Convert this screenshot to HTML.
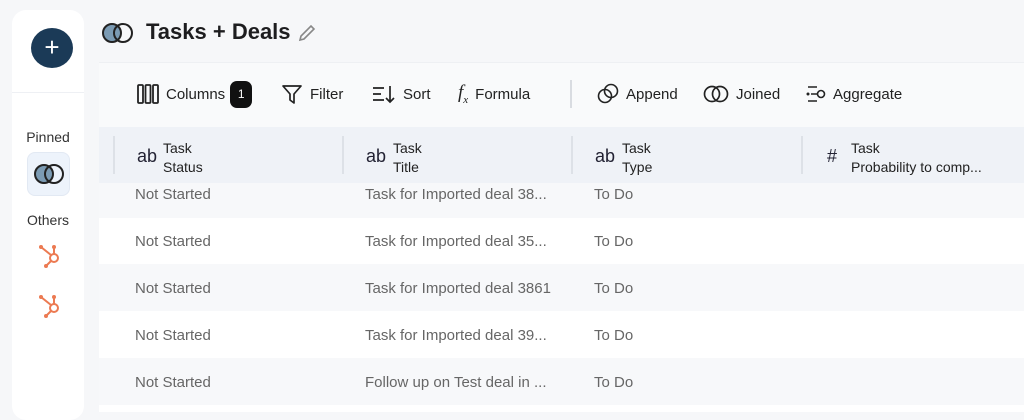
<!DOCTYPE html>
<html><head><style>
*{margin:0;padding:0;box-sizing:border-box}
body{width:1024px;height:412px;overflow:hidden;background:#f6f7f9;font-family:"Liberation Sans",sans-serif;position:relative;color:#1d1d1f}
.abs{position:absolute}
.side{left:12px;top:10px;width:72px;height:410px;background:#fff;border-radius:14px}
.plus{left:31px;top:28px;width:42px;height:40px;border-radius:50%;background:#1b3a57;color:#fff;font-size:26px;text-align:center;line-height:38px}
.lbl{font-size:14px;color:#333;width:72px;text-align:center;left:12px}
.tb{left:99px;top:62px;width:925px;height:65px;background:#f9fafb;border-top:1px solid #eef0f3}
.ti{top:82px;height:24px;font-size:15px;color:#222;display:flex;align-items:center;gap:7px}
.hd{left:99px;top:127px;width:925px;height:56px;background:#eff2f7}
.row{left:99px;width:925px}
.cell{font-size:15px;color:#666;position:absolute}
.hsep{top:136px;width:2px;height:38px;background:#dde1e7}
.hl{top:139px;font-size:14px;line-height:19px;color:#222}
.hi{top:146px;font-size:18px;color:#223}
</style></head><body>
<div class="abs side"></div>
<div class="abs" style="left:12px;top:92px;width:72px;height:1px;background:#eef0f4"></div>
<div class="abs plus">+</div>
<div class="abs lbl" style="top:129px">Pinned</div>
<div class="abs" style="left:27px;top:152px;width:43px;height:44px;border-radius:8px;background:#edf3fb;border:1px solid #e2e9f3"></div>
<svg class="abs" style="left:33px;top:163px" width="32" height="22"><circle cx="11" cy="11" r="9" fill="#7b9bb4" stroke="#222" stroke-width="2"/><circle cx="21" cy="11" r="9" fill="none" stroke="#222" stroke-width="2"/></svg>
<div class="abs lbl" style="top:212px">Others</div>
<svg class="abs" style="left:37px;top:243px" width="26" height="26" viewBox="0 0 26 26"><g stroke="#ec7a52" stroke-width="2" fill="none"><circle cx="17" cy="15" r="4"/><path d="M4 4l10 8M17 4v7M14 18l-5 5"/></g><circle cx="4" cy="4" r="2" fill="#ec7a52"/><circle cx="17" cy="4" r="2" fill="#ec7a52"/><circle cx="9" cy="23" r="2" fill="#ec7a52"/></svg>
<svg class="abs" style="left:37px;top:293px" width="26" height="26" viewBox="0 0 26 26"><g stroke="#ec7a52" stroke-width="2" fill="none"><circle cx="17" cy="15" r="4"/><path d="M4 4l10 8M17 4v7M14 18l-5 5"/></g><circle cx="4" cy="4" r="2" fill="#ec7a52"/><circle cx="17" cy="4" r="2" fill="#ec7a52"/><circle cx="9" cy="23" r="2" fill="#ec7a52"/></svg>

<svg class="abs" style="left:101px;top:22px" width="34" height="22"><circle cx="11" cy="11" r="9" fill="#7b9bb4" stroke="#222" stroke-width="2"/><circle cx="22" cy="11" r="9" fill="none" stroke="#222" stroke-width="2"/></svg>
<div class="abs" style="left:146px;top:19px;font-size:22px;font-weight:bold;color:#1d1d1f">Tasks + Deals</div>
<svg class="abs" style="left:297px;top:23px" width="20" height="20" viewBox="0 0 20 20"><path d="M3 17l1-4L14 3l3 3L7 16z" fill="none" stroke="#888" stroke-width="1.6"/></svg>

<div class="abs tb"></div>
<div class="abs ti" style="left:137px;top:80px;height:28px"><svg width="22" height="20"><g fill="none" stroke="#222" stroke-width="1.8"><rect x="1" y="1" width="5" height="18" rx="1"/><rect x="8.5" y="1" width="5" height="18" rx="1"/><rect x="16" y="1" width="5" height="18" rx="1"/></g></svg>Columns<span style="background:#111;color:#fff;border-radius:7px;width:22px;height:27px;display:inline-block;text-align:center;line-height:27px;font-size:12px;margin-left:-2px">1</span></div>
<div class="abs ti" style="left:281px"><svg width="22" height="22"><path d="M2 3h18l-7 8v9l-4-3v-6z" fill="none" stroke="#222" stroke-width="1.7" stroke-linejoin="round"/></svg>Filter</div>
<div class="abs ti" style="left:372px"><svg width="24" height="20"><g stroke="#222" stroke-width="1.7" fill="none"><path d="M1 4h11M1 10h8M1 16h11M18 2v16M14 14l4 4 4-4"/></g></svg>Sort</div>
<div class="abs ti" style="left:458px"><span style="font-style:italic;font-family:'Liberation Serif',serif;font-size:19px">f<sub style="font-size:11px">x</sub></span>Formula</div>
<div class="abs" style="left:570px;top:80px;width:2px;height:28px;background:#d9dce1"></div>
<div class="abs ti" style="left:597px"><svg width="22" height="22"><g fill="none" stroke="#222" stroke-width="1.6"><circle cx="8" cy="13" r="6.5"/><circle cx="14" cy="8" r="6.5"/></g></svg>Append</div>
<div class="abs ti" style="left:703px"><svg width="26" height="20"><g fill="none" stroke="#222" stroke-width="1.7"><circle cx="9" cy="10" r="7.5"/><circle cx="17" cy="10" r="7.5"/></g></svg>Joined</div>
<div class="abs ti" style="left:806px"><svg width="20" height="20"><g fill="none" stroke="#222" stroke-width="1.6"><path d="M2 3h9M5 10h6M2 17h9"/><circle cx="15" cy="10" r="3.5"/></g><circle cx="2" cy="10" r="1.5" fill="#222"/></svg>Aggregate</div>

<div class="abs hd"></div>
<div class="abs hsep" style="left:113px"></div><div class="abs hsep" style="left:342px"></div><div class="abs hsep" style="left:571px"></div><div class="abs hsep" style="left:801px"></div>
<div class="abs hi" style="left:137px">ab</div><div class="abs hl" style="left:163px">Task<br>Status</div>
<div class="abs hi" style="left:366px">ab</div><div class="abs hl" style="left:393px">Task<br>Title</div>
<div class="abs hi" style="left:595px">ab</div><div class="abs hl" style="left:622px">Task<br>Type</div>
<div class="abs hi" style="left:827px">#</div><div class="abs hl" style="left:851px">Task<br>Probability to comp...</div>

<div class="abs row" style="top:183px;height:35px;background:#f7f8fa"></div>
<div class="abs row" style="top:218px;height:46px;background:#fff"></div>
<div class="abs row" style="top:264px;height:47px;background:#f7f8fa"></div>
<div class="abs row" style="top:311px;height:47px;background:#fff"></div>
<div class="abs row" style="top:358px;height:47px;background:#f7f8fa"></div>
<div class="abs row" style="top:405px;height:7px;background:#fff"></div>

<div class="cell" style="left:135px;top:186px">Not Started</div><div class="cell" style="left:365px;top:186px">Task for Imported deal 38...</div><div class="cell" style="left:594px;top:186px">To Do</div>
<div class="cell" style="left:135px;top:233px">Not Started</div><div class="cell" style="left:365px;top:233px">Task for Imported deal 35...</div><div class="cell" style="left:594px;top:233px">To Do</div>
<div class="cell" style="left:135px;top:280px">Not Started</div><div class="cell" style="left:365px;top:280px">Task for Imported deal 3861</div><div class="cell" style="left:594px;top:280px">To Do</div>
<div class="cell" style="left:135px;top:327px">Not Started</div><div class="cell" style="left:365px;top:327px">Task for Imported deal 39...</div><div class="cell" style="left:594px;top:327px">To Do</div>
<div class="cell" style="left:135px;top:374px">Not Started</div><div class="cell" style="left:365px;top:374px">Follow up on Test deal in ...</div><div class="cell" style="left:594px;top:374px">To Do</div>
</body></html>
